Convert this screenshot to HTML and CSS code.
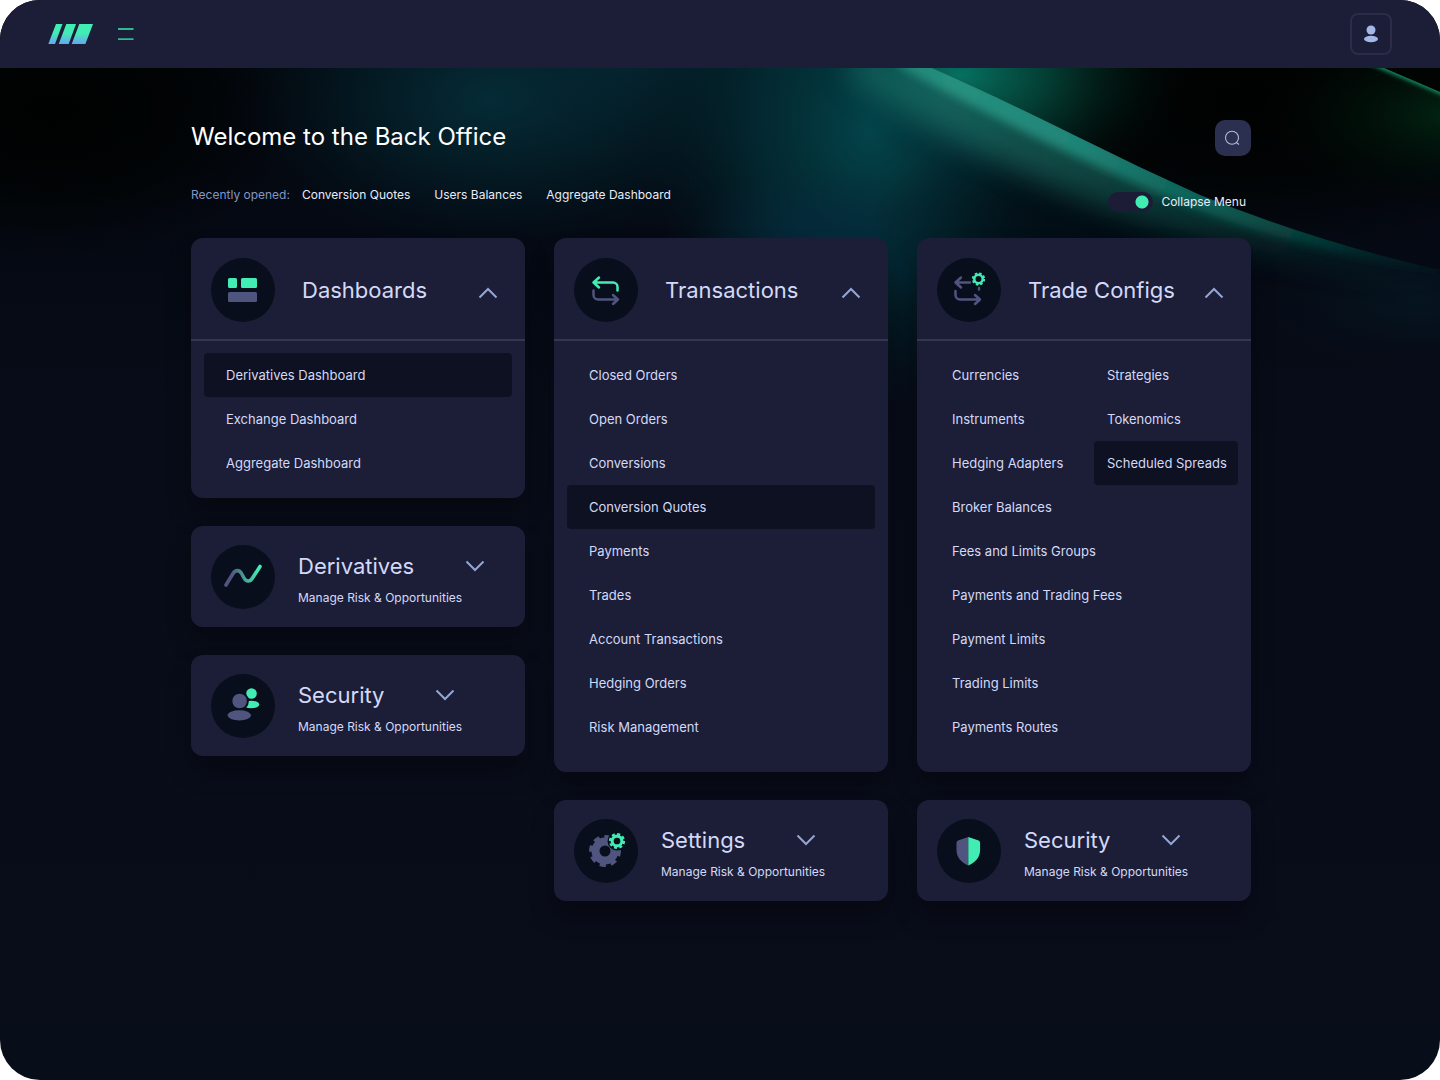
FILE: index.html
```
<!DOCTYPE html>
<html lang="en">
<head>
<meta charset="utf-8">
<meta name="viewport" content="width=device-width, initial-scale=1">
<title>Back Office</title>
<link rel="stylesheet" href="styles.css">
</head>
<body>
<div class="app">
  <svg class="backdrop" viewBox="0 0 1440 400" preserveAspectRatio="xMidYMin slice" aria-hidden="true">
    <defs>
      <radialGradient id="glow-blue"><stop offset="0" stop-color="#05303c"/><stop offset=".5" stop-color="#04222c" stop-opacity=".6"/><stop offset="1" stop-color="#02141c" stop-opacity="0"/></radialGradient>
      <radialGradient id="glow-navy"><stop offset="0" stop-color="#052a3e"/><stop offset="1" stop-color="#052a3e" stop-opacity="0"/></radialGradient>
      <radialGradient id="glow-teal"><stop offset="0" stop-color="#03444a"/><stop offset=".5" stop-color="#033038" stop-opacity=".7"/><stop offset="1" stop-color="#021a22" stop-opacity="0"/></radialGradient>
      <radialGradient id="glow-green"><stop offset="0" stop-color="#067060"/><stop offset=".4" stop-color="#044638" stop-opacity=".8"/><stop offset="1" stop-color="#010f0a" stop-opacity="0"/></radialGradient>
      <radialGradient id="glow-forest"><stop offset="0" stop-color="#022412"/><stop offset="1" stop-color="#010a06" stop-opacity="0"/></radialGradient>
      <radialGradient id="glow-dark"><stop offset="0" stop-color="#000201"/><stop offset=".5" stop-color="#000302" stop-opacity=".8"/><stop offset="1" stop-color="#000302" stop-opacity="0"/></radialGradient>
      <radialGradient id="shade"><stop offset="0" stop-color="#020f16" stop-opacity=".8"/><stop offset="1" stop-color="#020f16" stop-opacity="0"/></radialGradient>
      <linearGradient id="beam" gradientUnits="userSpaceOnUse" x1="880" y1="68" x2="1440" y2="290"><stop offset="0" stop-color="#1c8073"/><stop offset=".12" stop-color="#26917f"/><stop offset=".35" stop-color="#1f8577"/><stop offset=".6" stop-color="#0c6258" stop-opacity=".9"/><stop offset=".8" stop-color="#07443f" stop-opacity=".7"/><stop offset="1" stop-color="#052a2e" stop-opacity=".2"/></linearGradient>
      <filter id="blur-l" x="-20%" y="-50%" width="140%" height="200%"><feGaussianBlur stdDeviation="14"/></filter>
      <filter id="blur-s" x="-20%" y="-50%" width="140%" height="200%"><feGaussianBlur stdDeviation="5"/></filter>
      <filter id="blur-xs" x="-20%" y="-50%" width="140%" height="200%"><feGaussianBlur stdDeviation="2"/></filter>
      <clipPath id="below-beam"><path d="M0 0H860L932 68Q1000 98 1080 138Q1140 168 1200 195Q1320 243 1440 270V400H0Z"/></clipPath>
      <clipPath id="above-beam"><path d="M860 0L932 68Q1000 98 1080 138Q1140 168 1200 195Q1320 243 1440 270V0Z"/></clipPath>
      <clipPath id="below-edge"><path d="M1000 0H1240L1384 68L1440 92V400H1000Z"/></clipPath>
    </defs>
    <ellipse cx="50" cy="110" rx="250" ry="150" fill="url(#glow-dark)"/>
    <ellipse cx="1250" cy="100" rx="330" ry="150" fill="url(#glow-dark)"/>
    <ellipse cx="490" cy="100" rx="260" ry="160" fill="url(#glow-blue)"/>
    <ellipse cx="640" cy="60" rx="420" ry="190" fill="url(#glow-blue)" opacity=".6"/>
    <ellipse cx="870" cy="130" rx="230" ry="290" fill="url(#glow-teal)"/>
    <ellipse cx="820" cy="245" rx="130" ry="80" fill="url(#glow-navy)" opacity=".8"/>
    <g clip-path="url(#above-beam)">
      <ellipse cx="960" cy="75" rx="230" ry="130" fill="url(#glow-green)"/>
    </g>
    <g clip-path="url(#below-beam)">
      <ellipse cx="1070" cy="220" rx="200" ry="90" fill="url(#shade)"/>
      <path d="M850 50L932 60Q1000 92 1080 130Q1140 160 1200 187Q1320 235 1440 262V285Q1290 262 1160 225Q1010 180 850 80Z" fill="url(#beam)" opacity=".5" filter="url(#blur-l)"/>
      <path d="M885 50L932 60Q1000 90 1080 130Q1140 160 1200 187Q1320 235 1440 262V272Q1300 250 1190 207Q1060 154 900 68Z" fill="url(#beam)" filter="url(#blur-s)"/>
      <ellipse cx="1420" cy="300" rx="180" ry="70" fill="url(#glow-blue)" opacity=".3"/>
    </g>
    <g clip-path="url(#below-edge)">
      <ellipse cx="1450" cy="115" rx="190" ry="90" fill="url(#glow-forest)"/>
      <path d="M1365 58L1384 66L1450 94" fill="none" stroke="#14915f" stroke-width="8" filter="url(#blur-xs)"/>
    </g>
    <path d="M1384 67L1440 91V60H1384Z" fill="#010403"/>
  </svg>

  <header class="topbar">
    <a class="logo" href="#" aria-label="Home">
      <svg width="46" height="20" viewBox="0 0 46 20" aria-hidden="true">
        <defs><linearGradient id="logo-fill" x1="0" y1="0" x2="0" y2="20" gradientUnits="userSpaceOnUse"><stop offset=".45" stop-color="#42edb4"/><stop offset="1" stop-color="#68a4f4"/></linearGradient></defs>
        <path fill="url(#logo-fill)" d="M8 0h6.500L7 20H0.300ZM18.300 0h9.700L20.700 20H10.700ZM31.300 0H45L37.400 20H23.700Z"/>
      </svg>
    </a>
    <button class="menu-button" type="button" aria-label="Menu"><svg width="16" height="14" viewBox="0 0 16 14" aria-hidden="true"><path d="M0 2h15.500M0 12.200h15.500" stroke="#2fb893" stroke-width="1.800"/></svg></button>
    <button class="user-button" type="button" aria-label="Account"><svg width="16" height="18" viewBox="0 0 16 18" aria-hidden="true"><g fill="#a3b8e6"><circle cx="8" cy="5" r="4.500"/><ellipse cx="8" cy="14" rx="7" ry="3.200"/></g></svg></button>
  </header>

  <main class="content">
    <div class="heading">
      <h1>Welcome to the Back Office</h1>
      <button class="search-button" type="button" aria-label="Search"><svg width="18" height="18" viewBox="0 0 18 18" fill="none" stroke="#b0bade" stroke-width="1.100" aria-hidden="true"><circle cx="8" cy="8.800" r="6.500"/><path d="M12.300 13.500l2.700 2"/></svg></button>
    </div>
    <div class="subheading">
      <nav class="recent" aria-label="Recently opened">
        <span class="recent-label">Recently opened:</span>
        <a href="#">Conversion Quotes</a>
        <a href="#">Users Balances</a>
        <a href="#">Aggregate Dashboard</a>
      </nav>
      <label class="collapse"><input class="switch" type="checkbox" checked>Collapse Menu</label>
    </div>

    <div class="columns">
      <div class="column">
        <section class="card">
          <div class="card-head">
            <svg class="badge" viewBox="0 0 64 64" aria-hidden="true"><g fill="#42edb4"><rect x="17" y="20" width="9" height="10" rx="1.500"/><rect x="30" y="20" width="16" height="10" rx="1.500"/></g><rect x="17" y="34" width="29" height="10" rx="1.500" fill="#50557f"/></svg>
            <h2>Dashboards</h2>
            <button class="toggle" type="button" aria-expanded="true" aria-label="Collapse Dashboards"><svg viewBox="0 0 20 12" aria-hidden="true"><path d="M1.500 10.500L10 2l8.500 8.500"/></svg></button>
          </div>
          <div class="card-body short">
            <ul class="links">
              <li><a class="active" href="#">Derivatives Dashboard</a></li>
              <li><a href="#">Exchange Dashboard</a></li>
              <li><a href="#">Aggregate Dashboard</a></li>
            </ul>
          </div>
        </section>

        <section class="card compact">
          <svg class="badge" viewBox="0 0 64 64" aria-hidden="true"><defs><linearGradient id="wave" gradientUnits="userSpaceOnUse" x1="20" y1="0" x2="48" y2="0"><stop offset="0" stop-color="#50557f"/><stop offset="1" stop-color="#42edb4"/></linearGradient></defs><path d="M15 40L22 28.500C24.300 24.700 28.500 24.700 30.500 28.500L33 33C35.200 37 39 37 41.300 33.300L49 21.500" fill="none" stroke="url(#wave)" stroke-width="3.600" stroke-linecap="round"/></svg>
          <div class="summary">
            <div class="summary-head"><h2>Derivatives</h2><button class="toggle" type="button" aria-expanded="false" aria-label="Expand Derivatives"><svg viewBox="0 0 20 12" aria-hidden="true"><path d="M1.500 1.500L10 10l8.500-8.500"/></svg></button></div>
            <p>Manage Risk &amp; Opportunities</p>
          </div>
        </section>

        <section class="card compact">
          <svg class="badge" viewBox="0 0 64 64" aria-hidden="true"><g fill="#42edb4"><circle cx="40.500" cy="19.500" r="5.300"/><ellipse cx="40.300" cy="30.500" rx="8" ry="3.800"/></g><circle cx="28.600" cy="27" r="9.300" fill="#090e1c"/><ellipse cx="28.300" cy="41" rx="13" ry="6.500" fill="#090e1c"/><circle cx="28.600" cy="27" r="7.300" fill="#50557f"/><ellipse cx="28.300" cy="41.300" rx="11.700" ry="5.100" fill="#50557f"/></svg>
          <div class="summary">
            <div class="summary-head"><h2>Security</h2><button class="toggle" type="button" aria-expanded="false" aria-label="Expand Security"><svg viewBox="0 0 20 12" aria-hidden="true"><path d="M1.500 1.500L10 10l8.500-8.500"/></svg></button></div>
            <p>Manage Risk &amp; Opportunities</p>
          </div>
        </section>
      </div>

      <div class="column">
        <section class="card">
          <div class="card-head">
            <svg class="badge" viewBox="0 0 64 64" fill="none" stroke-width="2.500" stroke-linecap="round" stroke-linejoin="round" aria-hidden="true"><path d="M43.500 32.500V29a4.500 4.500 0 0 0-4.500-4.500H19.500M25 19.500l-5.500 5 5.500 5" stroke="#42edb4"/><path d="M19.500 32.500V37a4.500 4.500 0 0 0 4.500 4.500H43.500M39 37l5 4.500-5 4.500" stroke="#50557f"/></svg>
            <h2>Transactions</h2>
            <button class="toggle" type="button" aria-expanded="true" aria-label="Collapse Transactions"><svg viewBox="0 0 20 12" aria-hidden="true"><path d="M1.500 10.500L10 2l8.500 8.500"/></svg></button>
          </div>
          <div class="card-body">
            <ul class="links">
              <li><a href="#">Closed Orders</a></li>
              <li><a href="#">Open Orders</a></li>
              <li><a href="#">Conversions</a></li>
              <li><a class="active" href="#">Conversion Quotes</a></li>
              <li><a href="#">Payments</a></li>
              <li><a href="#">Trades</a></li>
              <li><a href="#">Account Transactions</a></li>
              <li><a href="#">Hedging Orders</a></li>
              <li><a href="#">Risk Management</a></li>
            </ul>
          </div>
        </section>

        <section class="card compact">
          <svg class="badge" viewBox="0 0 64 64" fill="none" aria-hidden="true"><g stroke="#50557f"><circle cx="31" cy="32" r="9.500" stroke-width="8"/><circle cx="31" cy="32" r="14" stroke-width="4" stroke-dasharray="6 4.996" transform="rotate(-4 31 32)"/></g><circle cx="43" cy="22" r="9.500" fill="#090e1c"/><g stroke="#42edb4"><circle cx="43" cy="22" r="4.900" stroke-width="3.100"/><circle cx="43" cy="22" r="7" stroke-width="2.200" stroke-dasharray="3 2.498"/></g></svg>
          <div class="summary">
            <div class="summary-head"><h2>Settings</h2><button class="toggle" type="button" aria-expanded="false" aria-label="Expand Settings"><svg viewBox="0 0 20 12" aria-hidden="true"><path d="M1.500 1.500L10 10l8.500-8.500"/></svg></button></div>
            <p>Manage Risk &amp; Opportunities</p>
          </div>
        </section>
      </div>

      <div class="column">
        <section class="card">
          <div class="card-head">
            <svg class="badge" viewBox="0 0 64 64" fill="none" stroke-width="2.500" stroke-linecap="round" stroke-linejoin="round" aria-hidden="true"><path d="M33 24.500H18.500M24 19.500l-5.500 5 5.500 5M42 30v1.500M18.500 33V37a4.500 4.500 0 0 0 4.500 4.500H42.500M38 37l5 4.500-5 4.500" stroke="#50557f"/><g stroke="#42edb4" stroke-linecap="butt"><circle cx="41.500" cy="21" r="4.200"/><circle cx="41.500" cy="21" r="5.700" stroke-width="1.900" stroke-dasharray="2.500 1.977"/></g></svg>
            <h2>Trade Configs</h2>
            <button class="toggle" type="button" aria-expanded="true" aria-label="Collapse Trade Configs"><svg viewBox="0 0 20 12" aria-hidden="true"><path d="M1.500 10.500L10 2l8.500 8.500"/></svg></button>
          </div>
          <div class="card-body">
            <ul class="links">
              <li><a href="#">Currencies</a></li>
              <li><a href="#">Instruments</a></li>
              <li><a href="#">Hedging Adapters</a></li>
              <li><a href="#">Broker Balances</a></li>
              <li><a href="#">Fees and Limits Groups</a></li>
              <li><a href="#">Payments and Trading Fees</a></li>
              <li><a href="#">Payment Limits</a></li>
              <li><a href="#">Trading Limits</a></li>
              <li><a href="#">Payments Routes</a></li>
            </ul>
            <ul class="links side">
              <li><a href="#">Strategies</a></li>
              <li><a href="#">Tokenomics</a></li>
              <li><a class="active" href="#">Scheduled Spreads</a></li>
            </ul>
          </div>
        </section>

        <section class="card compact">
          <svg class="badge" viewBox="0 0 64 64" aria-hidden="true"><path d="M31.300 18L21 21.600Q19.500 22.200 19.500 24V31C19.500 38 24 43.500 31.300 46.500Z" fill="#50557f"/><path d="M31.300 18L41.600 21.600Q43.100 22.200 43.100 24V31C43.100 38 38.600 43.500 31.300 46.500Z" fill="#42edb4"/></svg>
          <div class="summary">
            <div class="summary-head"><h2>Security</h2><button class="toggle" type="button" aria-expanded="false" aria-label="Expand Security"><svg viewBox="0 0 20 12" aria-hidden="true"><path d="M1.500 1.500L10 10l8.500-8.500"/></svg></button></div>
            <p>Manage Risk &amp; Opportunities</p>
          </div>
        </section>
      </div>
    </div>
  </main>
</div>
</body>
</html>
```
FILE: styles.css
```
* { box-sizing: border-box; }

body {
  margin: 0;
  background: #fff;
  font-family: Inter, "Liberation Sans", sans-serif;
  font-size: 13px;
  color: #d3d9f8;
}

h1, h2, p, ul { margin: 0; padding: 0; font-weight: 400; }
ul { list-style: none; }
a { color: inherit; text-decoration: none; }
button { padding: 0; border: 0; background: none; color: inherit; font: inherit; cursor: pointer; }
button svg, .logo svg { display: block; }

.app {
  position: relative;
  isolation: isolate;
  overflow: hidden;
  min-height: 100vh;
  border-radius: 40px;
  background: linear-gradient(#02060c, #050913 240px, #080c18 400px, #080d1a);
}

.backdrop {
  position: absolute;
  z-index: -1;
  top: 0;
  left: 0;
  width: 100%;
}

.topbar {
  display: flex;
  align-items: center;
  gap: 24px;
  height: 68px;
  padding: 0 48px;
  background: #1c1e37;
}

.user-button {
  display: grid;
  place-items: center;
  width: 42px;
  height: 42px;
  margin-left: auto;
  border: 2px solid #2a2c48;
  border-radius: 8px;
}

.content {
  max-width: 1100px;
  margin: 0 auto;
  padding: 52px 19px 80px 21px;
}

.heading {
  display: flex;
  align-items: flex-start;
  justify-content: space-between;
}

h1 { font-size: 24px; line-height: 34px; color: #fff; }

.search-button {
  display: grid;
  place-items: center;
  width: 36px;
  height: 36px;
  border-radius: 10px;
  background: #2b2f50;
}

.subheading {
  display: flex;
  justify-content: space-between;
  min-height: 26px;
  margin: 30px 0 26px;
}

.recent {
  display: flex;
  align-self: flex-start;
  gap: 24px;
  font-size: 12px;
  line-height: 18px;
  color: #e8ecfb;
}

.recent-label { margin-right: -12px; color: #8296c4; }

.collapse {
  display: flex;
  align-items: center;
  align-self: flex-end;
  gap: 8px;
  padding-right: 5px;
  font-size: 12px;
  line-height: 20px;
  color: #e8ecfb;
}

.switch {
  appearance: none;
  width: 45px;
  height: 20px;
  margin: 0;
  border-radius: 10px;
  background: radial-gradient(circle at 34px 10px, #42edb4 6px, transparent 7px) #1c1c36;
}

.columns {
  display: grid;
  grid-template-columns: repeat(3, minmax(0, 1fr));
  gap: 29px;
  align-items: start;
}

.column {
  display: grid;
  grid-template-columns: minmax(0, 1fr);
  gap: 28px;
}

.card {
  border-radius: 12px;
  background: #1c1e37;
  box-shadow: 0 16px 24px rgba(0, 0, 0, .3);
}

.card-head {
  display: flex;
  align-items: center;
  height: 103px;
  padding: 2px 27px 0 20px;
  border-bottom: 2px solid #35374f;
}

.card-head h2 { margin: 0 auto 0 27px; }
.card-head .toggle { padding-top: 6px; }

h2 { font-size: 22px; line-height: 28px; white-space: nowrap; }

.badge {
  flex: none;
  width: 64px;
  height: 64px;
  border-radius: 50%;
  background: #090e1c;
}

.toggle svg {
  width: 20px;
  height: 12px;
  fill: none;
  stroke: #94a6d4;
  stroke-width: 2;
}

.card-body {
  display: flex;
  min-height: 431px;
  padding: 12px 13px;
}

.card-body.short { min-height: 0; padding-bottom: 13px; }

.links { flex: 1; min-width: 0; }
.links.side { flex: 0 0 144px; }

.links a {
  display: block;
  padding: 0 22px;
  border-radius: 4px;
  line-height: 44px;
  white-space: nowrap;
}

.links.side a { padding: 0 13px; }
.links .active { background: #0e1122; }

.compact {
  display: flex;
  align-items: center;
  gap: 23px;
  min-height: 101px;
  padding: 18px 20px;
}

.summary { padding-top: 6px; }

.summary-head {
  display: flex;
  align-items: center;
  gap: 51px;
}

.summary p {
  margin-top: 8px;
  font-size: 12px;
  line-height: 20px;
}
```
